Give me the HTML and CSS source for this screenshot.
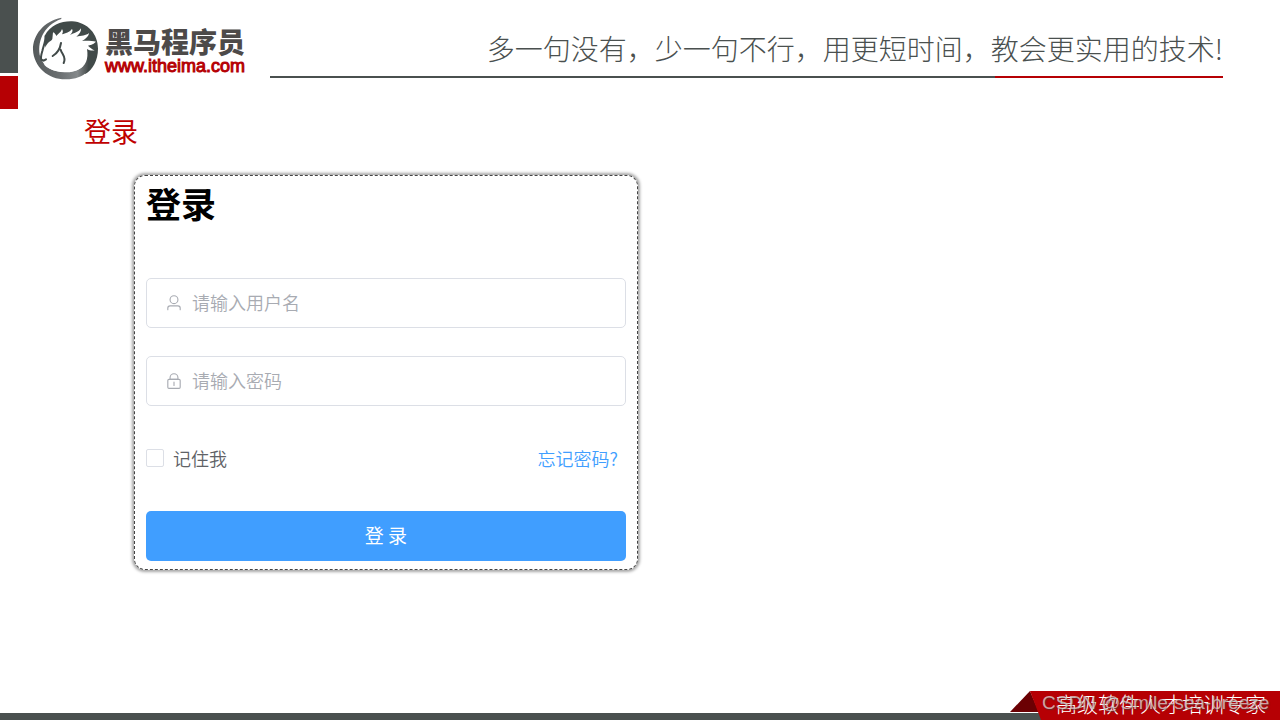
FILE: index.html
```html
<!DOCTYPE html>
<html lang="zh-CN">
<head>
  <meta charset="UTF-8" />
  <meta name="viewport" content="width=device-width, initial-scale=1.0"/>
  <title>登录</title>
  <link rel="stylesheet" href="styles.css">
</head>
<body>
  <header class="header">
    <div class="side-bar">
      <span class="side-grey"></span>
      <span class="side-red"></span>
    </div>
    <div class="brand">
      <svg class="logo" viewBox="20 20 201 189" aria-hidden="true">
        <defs>
          <linearGradient id="ring" x1="0" y1="0" x2="1" y2="0">
            <stop offset="0" stop-color="#555a5b"/>
            <stop offset="0.5" stop-color="#6c7072"/>
            <stop offset="0.8" stop-color="#85898b"/>
            <stop offset="1" stop-color="#444a4a"/>
          </linearGradient>
        </defs>
        <path fill="#414a49" d="M58 76C76 44 108 32 140 33C188 36 218 72 218 115C218 150 202 178 180 191L172 168L60 120Z"/>
        <path fill="url(#ring)" d="M108 22C55 32 22 75 23 118C25 170 70 208 122 207C150 206 172 199 185 184C192 166 190 158 186 145C178 172 152 187 118 186C85 186 55 170 45 140C34 100 52 45 108 26Z"/>
        <path fill="#fff" d="M50 148L50 132C56 116 60 108 68 98C74 92 78 92 81 86L83 66C88 68 91 72 93 77C98 70 106 68 110 56C114 62 113 67 110 72C120 68 134 66 140 55C144 62 140 68 134 74C146 68 160 66 167 54C168 64 162 72 153 79C168 76 182 76 191 68C190 78 180 87 170 92C184 90 202 92 212 94C202 104 194 104 188 106C194 112 202 118 208 120C200 122 192 120 185 116C190 145 182 168 158 178C128 190 82 188 58 165Z"/>
        <path class="line" d="M61 78C61 94 54 108 51 122C48 132 45 141 48 148L55 151L62 147"/>
        <path class="line" d="M82 137C94 130 104 118 107 98"/>
        <path class="line" d="M106 118C110 132 124 140 115 158"/>
      </svg>
      <div class="brand-text">
        <span class="brand-name">黑马程序员</span>
        <span class="brand-url">www.itheima.com</span>
      </div>
    </div>
    <p class="slogan">多一句没有，少一句不行，用更短时间，教会更实用的技术!</p>
  </header>

  <main class="content">
    <h2 class="title">登录</h2>
    <form class="login">
      <h1>登录</h1>
      <label class="field">
        <svg viewBox="0 0 1024 1024" aria-hidden="true">
          <path d="M512 512a192 192 0 1 0 0-384 192 192 0 0 0 0 384zm0 64a256 256 0 1 1 0-512 256 256 0 0 1 0 512zm320 320v-96a96 96 0 0 0-96-96H288a96 96 0 0 0-96 96v96a32 32 0 1 1-64 0v-96a160 160 0 0 1 160-160h448a160 160 0 0 1 160 160v96a32 32 0 1 1-64 0z"/>
        </svg>
        <input type="text" placeholder="请输入用户名" aria-label="用户名">
      </label>
      <label class="field">
        <svg viewBox="0 0 1024 1024" aria-hidden="true">
          <path d="M224 448a32 32 0 0 0-32 32v384a32 32 0 0 0 32 32h576a32 32 0 0 0 32-32V480a32 32 0 0 0-32-32H224zm0-64h576a96 96 0 0 1 96 96v384a96 96 0 0 1-96 96H224a96 96 0 0 1-96-96V480a96 96 0 0 1 96-96z"/>
          <path d="M512 544a32 32 0 0 1 32 32v192a32 32 0 1 1-64 0V576a32 32 0 0 1 32-32zm192-160v-64a192 192 0 1 0-384 0v64h384zM512 64a256 256 0 0 1 256 256v128H256V320A256 256 0 0 1 512 64z"/>
        </svg>
        <input type="password" placeholder="请输入密码" aria-label="密码">
      </label>
      <div class="options">
        <label class="remember"><input type="checkbox">记住我</label>
        <a href="#">忘记密码?</a>
      </div>
      <button type="submit">登 录</button>
    </form>
  </main>

  <footer class="footer">
    <div class="ribbon">
      <span class="ribbon-text">高级软件人才培训专家</span>
      <span class="watermark">CSDN @Smile-sea-breeze</span>
    </div>
  </footer>
</body>
</html>
```

FILE: styles.css
```css
:root {
  --grey: #4a504f;
  --red: #b60004;
  --blue: #409eff;
  --border: #dcdfe6;
  --muted: #a8abb2;
}

* {
  box-sizing: border-box;
  margin: 0;
  padding: 0;
}

body {
  min-height: 100vh;
  display: flex;
  flex-direction: column;
  background: #fff;
  font-family: "Noto Sans CJK SC", sans-serif;
}

/* header */
.header {
  display: flex;
  align-items: flex-start;
  padding-right: 57px;
}

.side-bar {
  display: flex;
  flex-direction: column;
  gap: 3px;
  width: 18px;
  margin-right: 14px;
}

.side-grey {
  height: 73px;
  background: var(--grey);
}

.side-red {
  height: 33px;
  background: var(--red);
}

.brand {
  display: flex;
  gap: 6px;
  padding-top: 17px;
  margin-right: 25px;
}

.logo {
  width: 67px;
  height: 63px;
}

.logo .line {
  fill: none;
  stroke: #414a49;
  stroke-width: 6;
  stroke-linecap: round;
}

.brand-text {
  display: flex;
  flex-direction: column;
  padding-top: 9px;
}

.brand-name {
  font-size: 28px;
  line-height: 30px;
  font-weight: 900;
  color: #4d4a49;
}

.brand-url {
  font-family: "Liberation Sans", sans-serif;
  font-size: 18px;
  line-height: 20px;
  color: var(--red);
  -webkit-text-stroke: 1px var(--red);
}

.slogan {
  flex: 1;
  height: 78px;
  padding-top: 28px;
  text-align: right;
  font-family: KaiTi, "Noto Sans CJK SC", sans-serif;
  font-size: 28px;
  font-weight: 300;
  line-height: 40px;
  color: var(--grey);
  white-space: nowrap;
  border-bottom: 2px solid;
  border-image: linear-gradient(to right, var(--grey) 76%, var(--red) 76%) 1;
}

/* login */
.content {
  flex: 1;
  padding: 2px 84px 0;
}

.title {
  font-size: 27px;
  line-height: 40px;
  font-weight: 400;
  color: #c00000;
}

.login {
  display: flex;
  flex-direction: column;
  gap: 28px;
  max-width: 504px;
  margin: 24px 0 0 50px;
  padding: 9px 11px 8px;
  border: 1px dashed #444;
  border-radius: 11px;
  box-shadow: 0 0 3px 2px rgba(0, 0, 0, 0.35);
}

.login h1 {
  font-size: 35px;
  line-height: 36px;
  font-weight: 700;
  margin-bottom: 29px;
  color: #000;
}

.field {
  display: flex;
  align-items: center;
  gap: 9px;
  height: 50px;
  padding: 0 18px;
  border: 1px solid var(--border);
  border-radius: 5px;
}

.field svg {
  width: 18px;
  height: 18px;
  fill: var(--muted);
}

.field input {
  flex: 1;
  padding-bottom: 2px;
  border: none;
  outline: none;
  background: transparent;
  font: inherit;
  font-size: 18px;
  font-weight: 350;
}

.field input::placeholder {
  color: var(--muted);
}

.options {
  display: flex;
  align-items: center;
  justify-content: space-between;
  height: 49px;
  padding: 0 8px 2px 0;
  font-size: 18px;
  font-weight: 350;
}

.remember {
  display: flex;
  align-items: center;
  gap: 9px;
  color: #606266;
}

.remember input {
  appearance: none;
  width: 18px;
  height: 18px;
  border: 1px solid var(--border);
  border-radius: 2px;
}

.remember input:checked {
  background: var(--blue);
}

.options a {
  color: var(--blue);
  text-decoration: none;
}

.login button {
  height: 50px;
  padding-bottom: 4px;
  border: none;
  border-radius: 5px;
  background: var(--blue);
  color: #fff;
  font: inherit;
  font-size: 19px;
  cursor: pointer;
}

/* footer */
.footer {
  display: flex;
  justify-content: flex-end;
  background: linear-gradient(var(--grey), var(--grey)) bottom / 100% 7px no-repeat;
}

.ribbon {
  position: relative;
  isolation: isolate;
  width: 270px;
  height: 29px;
  padding-left: 46px;
  color: #fff;
}

.ribbon::before,
.ribbon::after {
  content: "";
  position: absolute;
  inset: 0;
  z-index: -1;
}

.ribbon::before {
  background: #6b0003;
  clip-path: polygon(20px 0, 29px 21px, 0 21px);
}

.ribbon::after {
  background: var(--red);
  clip-path: polygon(20px 0, 100% 0, 100% 100%, 31px 100%);
}

.ribbon-text {
  display: block;
  font-family: KaiTi, "Noto Sans CJK SC", sans-serif;
  font-size: 21px;
  font-weight: 300;
  line-height: 24px;
  white-space: nowrap;
}

.watermark {
  position: absolute;
  left: 32px;
  top: 0;
  font-family: "Liberation Sans", sans-serif;
  font-size: 19px;
  line-height: 24px;
  white-space: nowrap;
  color: rgba(225, 205, 205, 0.8);
  text-shadow: 1px 1px 1px rgba(60, 60, 60, 0.6);
}
```
